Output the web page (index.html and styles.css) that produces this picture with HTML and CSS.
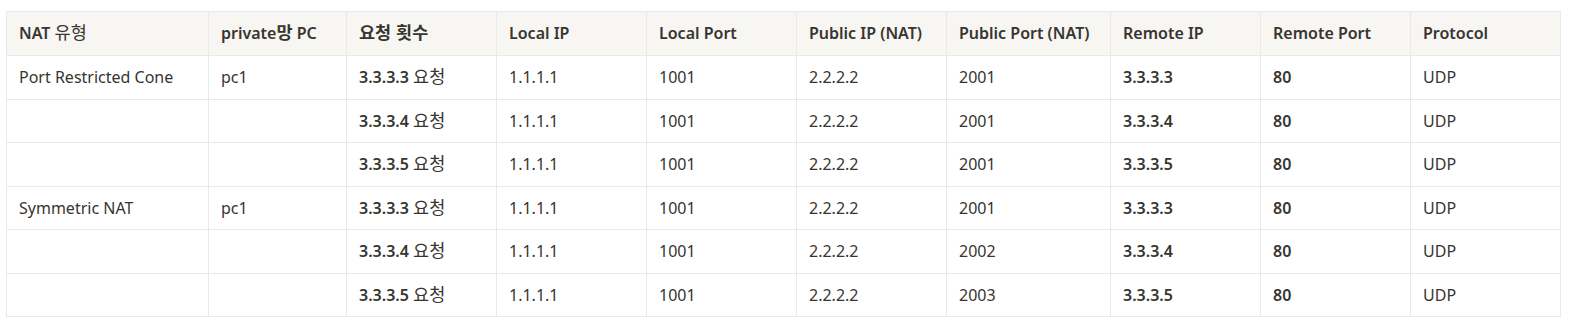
FILE: index.html
```html
<!DOCTYPE html>
<html lang="ko">
<head>
<meta charset="utf-8">
<link rel="stylesheet" href="styles.css">
</head>
<body>
<div class="wrap">
<table class="nat">
<colgroup>
<col class="c1"><col class="c2"><col class="c3"><col class="c4"><col class="c5"><col class="c6"><col class="c7"><col class="c8"><col class="c9"><col class="c10">
</colgroup>
<thead>
<tr><th>NAT <span class="ko thin">유형</span></th><th>private<span class="ko">망</span> PC</th><th><span class="ko">요청 횟수</span></th><th>Local IP</th><th>Local Port</th><th>Public IP (NAT)</th><th>Public Port (NAT)</th><th>Remote IP</th><th>Remote Port</th><th>Protocol</th></tr>
</thead>
<tbody>
<tr><td>Port Restricted Cone</td><td>pc1</td><td><b>3.3.3.3</b> <span class="ko">요청</span></td><td>1.1.1.1</td><td>1001</td><td>2.2.2.2</td><td>2001</td><td><b>3.3.3.3</b></td><td><b>80</b></td><td>UDP</td></tr>
<tr><td></td><td></td><td><b>3.3.3.4</b> <span class="ko">요청</span></td><td>1.1.1.1</td><td>1001</td><td>2.2.2.2</td><td>2001</td><td><b>3.3.3.4</b></td><td><b>80</b></td><td>UDP</td></tr>
<tr><td></td><td></td><td><b>3.3.3.5</b> <span class="ko">요청</span></td><td>1.1.1.1</td><td>1001</td><td>2.2.2.2</td><td>2001</td><td><b>3.3.3.5</b></td><td><b>80</b></td><td>UDP</td></tr>
<tr><td>Symmetric NAT</td><td>pc1</td><td><b>3.3.3.3</b> <span class="ko">요청</span></td><td>1.1.1.1</td><td>1001</td><td>2.2.2.2</td><td>2001</td><td><b>3.3.3.3</b></td><td><b>80</b></td><td>UDP</td></tr>
<tr><td></td><td></td><td><b>3.3.3.4</b> <span class="ko">요청</span></td><td>1.1.1.1</td><td>1001</td><td>2.2.2.2</td><td>2002</td><td><b>3.3.3.4</b></td><td><b>80</b></td><td>UDP</td></tr>
<tr><td></td><td></td><td><b>3.3.3.5</b> <span class="ko">요청</span></td><td>1.1.1.1</td><td>1001</td><td>2.2.2.2</td><td>2003</td><td><b>3.3.3.5</b></td><td><b>80</b></td><td>UDP</td></tr>
</tbody>
</table>
</div>
</body>
</html>
```
FILE: styles.css
```css
html, body {
  margin: 0;
  background: #ffffff;
}
.wrap {
  padding: 11px 13px 0 6px;
}
.nat {
  border-collapse: collapse;
  table-layout: fixed;
  width: 1555px;
  font-family: "Noto Sans", "Noto Sans CJK KR", sans-serif;
  font-size: 16px;
  line-height: 1.4;
  color: #37352f;
}
.c1 { width: 202px; }
.c2 { width: 138px; }
.c3, .c4, .c5, .c6, .c8, .c9, .c10 { width: 150px; }
.c7 { width: 164px; }
.nat th, .nat td {
  border: 1px solid #e9e9e7;
  padding: 0 12px;
  text-align: left;
  vertical-align: middle;
  white-space: nowrap;
}
.nat th {
  height: 43px;
  background: #f7f6f3;
  font-weight: 600;
}
.nat td {
  height: 42.5px;
  font-weight: 400;
}
.nat b {
  font-weight: 600;
}
.ko {
  font-family: "Noto Sans CJK KR", sans-serif;
  font-size: 17.5px;
  line-height: 1;
}
.thin {
  font-weight: 400;
}
```
